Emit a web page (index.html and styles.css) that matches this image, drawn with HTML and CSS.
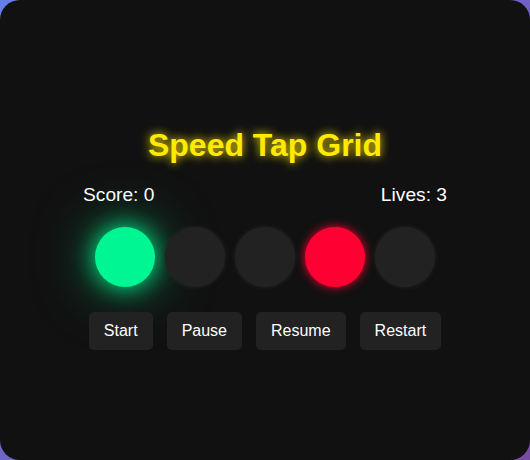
FILE: index.html
```html
<!DOCTYPE html>
<html lang="en">
<head>
<meta charset="utf-8">
<title>Speed Tap Grid</title>
<link rel="stylesheet" href="styles.css">
</head>
<body>
<div class="game">
  <h1 class="title">Speed Tap Grid</h1>
  <div class="stats">
    <span class="stat">Score: 0</span>
    <span class="stat">Lives: 3</span>
  </div>
  <div class="grid">
    <div class="cell cell-green"></div>
    <div class="cell"></div>
    <div class="cell"></div>
    <div class="cell cell-red"></div>
    <div class="cell"></div>
  </div>
  <div class="controls">
    <button class="btn">Start</button>
    <button class="btn">Pause</button>
    <button class="btn">Resume</button>
    <button class="btn">Restart</button>
  </div>
</div>
</body>
</html>
```
FILE: styles.css
```css
html, body {
  margin: 0;
  padding: 0;
  height: 100%;
}
body {
  background: linear-gradient(135deg, #667eea, #764ba2);
  font-family: "Liberation Sans", Arial, sans-serif;
}
.game {
  box-sizing: border-box;
  width: 530px;
  height: 460px;
  background: #111111;
  border-radius: 20px;
  display: flex;
  flex-direction: column;
  align-items: center;
  justify-content: center;
  color: #ffffff;
}
.title {
  margin: 17px 0 20px;
  font-size: 32px;
  font-weight: bold;
  color: #ffea00;
  text-shadow: 0 0 10px #ffea00;
}
.stats {
  width: 364px;
  display: flex;
  justify-content: space-between;
  margin-bottom: 21px;
}
.stat {
  font-size: 19.2px;
}
.grid {
  display: flex;
  gap: 10px;
  margin-bottom: 25px;
}
.cell {
  width: 60px;
  height: 60px;
  border-radius: 50%;
  background: #222222;
  box-shadow: 0 0 4px #262626;
}
.cell-green {
  background: #00f593;
  box-shadow: 0 0 25px #00f593, 0 0 60px rgba(0, 245, 147, 0.5);
}
.cell-red {
  background: #ff0033;
  box-shadow: 0 0 10px #ff0033;
}
.controls {
  display: flex;
  gap: 14px;
}
.btn {
  font-family: "Liberation Sans", Arial, sans-serif;
  font-size: 16px;
  color: #ffffff;
  background: #222222;
  border: none;
  border-radius: 5px;
  padding: 10px 15px;
  line-height: 18px;
}
```
